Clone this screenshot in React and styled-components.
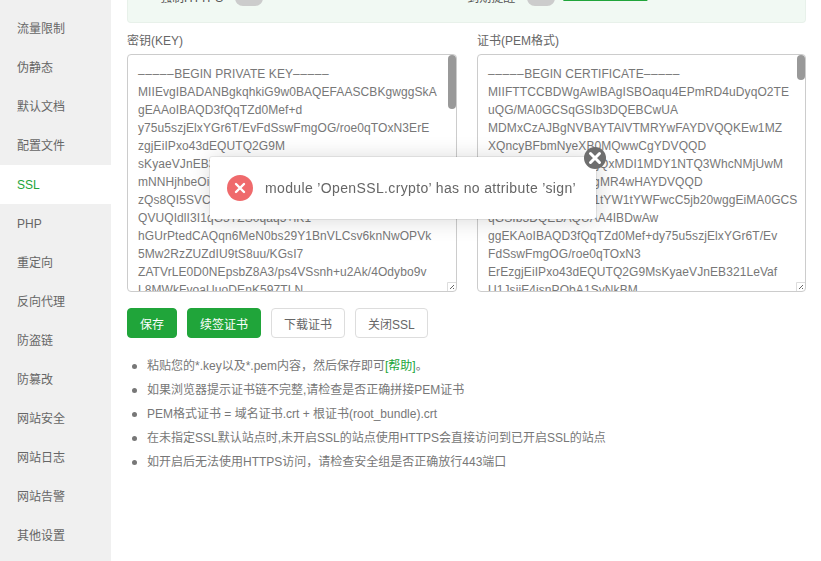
import React from 'react';
import styled, { createGlobalStyle } from 'styled-components';

const GlobalStyle = createGlobalStyle`
  html, body {
    margin: 0;
    height: 100%;
    overflow: hidden;
    background: #fff;
  }
  body {
    font-family: "Liberation Sans", "Noto Sans CJK SC", sans-serif;
    font-size: 12px;
    color: #666;
  }
`;

const Page = styled.div`
  display: flex;
  width: 821px;
  height: 561px;
  overflow: hidden;
`;
const Sidebar = styled.ul`
  flex: 0 0 111px;
  margin: 0;
  padding: 9px 0 0;
  list-style: none;
  background: #f0f0f0;
`;
const SideItem = styled.li`
  height: 39px;
  line-height: 40px;
  padding-left: 17px;
  color: ${props => (props.$active ? '#20a53a' : '#666')};
  background: ${props => (props.$active ? '#fff' : 'transparent')};
`;
const Main = styled.div`
  flex: 1;
  padding: 0 15px 0 16px;
`;
const SettingsBox = styled.div`
  display: flex;
  align-items: flex-end;
  height: 23px;
  box-sizing: border-box;
  overflow: hidden;
  background: #f1f9f3;
  border: 1px solid #e8f1ea;
  border-top: 0;
  border-radius: 0 0 4px 4px;
`;
const Setting = styled.div`
  display: flex;
  align-items: center;
  height: 20px;
  margin-bottom: 14px;
  margin-left: ${props => props.$offset}px;
  white-space: nowrap;
  color: #555;
`;
const SettingLabel = styled.span`
  margin-bottom: 4px;
`;
const Toggle = styled.span`
  width: 28px;
  height: 16px;
  margin-left: 12px;
  border-radius: 8px;
  background: #ccc;
`;
const AlertLink = styled.span`
  margin: 0 0 9px 8px;
  color: #20a53a;
  text-decoration: underline;
`;
const Columns = styled.div`
  display: grid;
  grid-template-columns: 330px 329px;
  column-gap: 20px;
  margin-top: 9px;
`;
const Label = styled.div`
  height: 18px;
  line-height: 18px;
  margin-bottom: 4px;
`;
const PemFrame = styled.div`
  position: relative;
`;
const PemBox = styled.div`
  box-sizing: border-box;
  height: 238px;
  padding: 10px;
  border: 1px solid #ccc;
  border-radius: 4px;
  background: #fff;
  overflow: hidden;
  line-height: 18px;
  letter-spacing: 0.08px;
  white-space: pre;
  color: #777;
`;
const Dashes = styled.span`
  letter-spacing: 0.55px;
`;
const ScrollThumb = styled.div`
  position: absolute;
  top: 1px;
  right: 1px;
  width: 8px;
  height: ${props => props.$height}px;
  border-radius: 4px;
  background: #999;
`;
const ResizeGrip = styled.svg`
  position: absolute;
  right: 1px;
  bottom: 1px;
  width: 9px;
  height: 9px;
`;
const Actions = styled.div`
  display: flex;
  gap: 10px;
  margin-top: 16px;
`;
const Button = styled.button`
  height: 30px;
  padding: 0 12px;
  font: inherit;
  border-radius: 4px;
  border: 1px solid ${props => (props.$primary ? '#20a53a' : '#ddd')};
  background: ${props => (props.$primary ? '#20a53a' : '#fff')};
  color: ${props => (props.$primary ? '#fff' : '#666')};
`;
const Notes = styled.ul`
  margin: 16px 0 0;
  padding: 0 0 0 20px;
  list-style: none;
  color: #777;
  line-height: 24px;
  li::before {
    content: '';
    display: inline-block;
    width: 5px;
    height: 5px;
    margin: 0 10px 1px -15px;
    border-radius: 50%;
    background: #777;
    vertical-align: middle;
  }
`;
const HelpLink = styled.span`
  color: #20a53a;
`;
const Toast = styled.div`
  position: fixed;
  left: 210px;
  top: 157px;
  width: 386px;
  height: 62px;
  display: flex;
  align-items: center;
  box-sizing: border-box;
  padding-left: 17px;
  background: #fff;
  border-radius: 2px;
  box-shadow: 0 0 0 1px rgba(0, 0, 0, 0.07), 1px 1px 22px rgba(0, 0, 0, 0.16);
`;
const ErrorIcon = styled.svg`
  width: 26px;
  height: 26px;
  flex: none;
  margin-right: 12px;
`;
const ToastText = styled.span`
  font-size: 14px;
  letter-spacing: 0.36px;
  color: #666;
  white-space: nowrap;
`;
const CloseIcon = styled.svg`
  position: absolute;
  right: -10px;
  top: -10px;
  width: 22px;
  height: 22px;
`;

const NAV = ['流量限制', '伪静态', '默认文档', '配置文件', 'SSL', 'PHP', '重定向', '反向代理', '防盗链', '防篡改', '网站安全', '网站日志', '网站告警', '其他设置'];

const KEY_TEXT = `MIIEvgIBADANBgkqhkiG9w0BAQEFAASCBKgwggSkA
gEAAoIBAQD3fQqTZd0Mef+d
y75u5szjElxYGr6T/EvFdSswFmgOG/roe0qTOxN3ErE
zgjEiIPxo43dEQUTQ2G9M
sKyaeVJnEB321LeVafU1JsjjE4jsnPObA
mNNHjhbeOiqL0vQ7d2sX1oYtGm
zQs8QI5SVCk3mZpW7uJfHdR2nTa
QVUQIdlI3I1qG5TZS0qaq5+lK1
hGUrPtedCAQqn6MeN0bs29Y1BnVLCsv6knNwOPVk
5Mw2RzZUZdIU9tS8uu/KGsI7
ZATVrLE0D0NEpsbZ8A3/ps4VSsnh+u2Ak/4Odybo9v
L8MWkFvoaUuoDEnK597TLN`;

const CERT_TEXT = `MIIFTTCCBDWgAwIBAgISBOaqu4EPmRD4uDyqO2TE
uQG/MA0GCSqGSIb3DQEBCwUA
MDMxCzAJBgNVBAYTAlVTMRYwFAYDVQQKEw1MZ
XQncyBFbmNyeXB0MQwwCgYDVQQD
EwNSMTEwHhcNMjQxMDI1MDY1NTQ3WhcNMjUwM
TIzMDY1NTQ2WjAgMR4wHAYDVQQD
ExVtYWlsLmV4YW1tYW1tYWFwcC5jb20wggEiMA0GCS
qGSIb3DQEBAQUAA4IBDwAw
ggEKAoIBAQD3fQqTZd0Mef+dy75u5szjElxYGr6T/Ev
FdSswFmgOG/roe0qTOxN3
ErEzgjEiIPxo43dEQUTQ2G9MsKyaeVJnEB321LeVaf
U1JsjjE4jsnPObA1SvNkBM`;

function PemField({ title, heading, body, thumb }) {
  return (
    <div>
      <Label>{title}</Label>
      <PemFrame>
        <PemBox>
          <Dashes>–––––</Dashes>{heading}<Dashes>–––––</Dashes>{'\n'}{body}
        </PemBox>
        <ScrollThumb $height={thumb} />
        <ResizeGrip viewBox="0 0 9 9">
          <path d="M.5 9V.5H9" fill="#fff" stroke="#ddd" />
          <path d="M3 7l4-4M6 7l1-1" stroke="#666" />
        </ResizeGrip>
      </PemFrame>
    </div>
  );
}

export default function App() {
  return (
    <Page>
      <GlobalStyle />
      <Sidebar>
        {NAV.map(name => (
          <SideItem key={name} $active={name === 'SSL'}>{name}</SideItem>
        ))}
      </Sidebar>
      <Main>
        <SettingsBox>
          <Setting $offset={32}><SettingLabel>强制HTTPS</SettingLabel><Toggle /></Setting>
          <Setting $offset={204}><SettingLabel>到期提醒</SettingLabel><Toggle /><AlertLink>未配置告警通知</AlertLink></Setting>
        </SettingsBox>
        <Columns>
          <PemField title="密钥(KEY)" heading="BEGIN PRIVATE KEY" body={KEY_TEXT} thumb={54} />
          <PemField title="证书(PEM格式)" heading="BEGIN CERTIFICATE" body={CERT_TEXT} thumb={25} />
        </Columns>
        <Actions>
          <Button $primary>保存</Button>
          <Button $primary>续签证书</Button>
          <Button>下载证书</Button>
          <Button>关闭SSL</Button>
        </Actions>
        <Notes>
          <li>粘贴您的*.key以及*.pem内容，然后保存即可<HelpLink>[帮助]</HelpLink>。</li>
          <li>如果浏览器提示证书链不完整,请检查是否正确拼接PEM证书</li>
          <li>PEM格式证书 = 域名证书.crt + 根证书(root_bundle).crt</li>
          <li>在未指定SSL默认站点时,未开启SSL的站点使用HTTPS会直接访问到已开启SSL的站点</li>
          <li>如开启后无法使用HTTPS访问，请检查安全组是否正确放行443端口</li>
        </Notes>
      </Main>
      <Toast>
        <ErrorIcon viewBox="0 0 26 26">
          <circle cx="13" cy="13" r="13" fill="#ef6a6c" />
          <path d="M9 9l8 8M17 9l-8 8" stroke="#fff" strokeWidth="2.4" strokeLinecap="round" />
        </ErrorIcon>
        <ToastText>module ’OpenSSL.crypto’ has no attribute ’sign’</ToastText>
        <CloseIcon viewBox="0 0 22 22">
          <circle cx="11" cy="11" r="11" fill="#6e6e6e" />
          <path d="M6.5 6.5l9 9M15.5 6.5l-9 9" stroke="#fff" strokeWidth="3" strokeLinecap="round" />
        </CloseIcon>
      </Toast>
    </Page>
  );
}
